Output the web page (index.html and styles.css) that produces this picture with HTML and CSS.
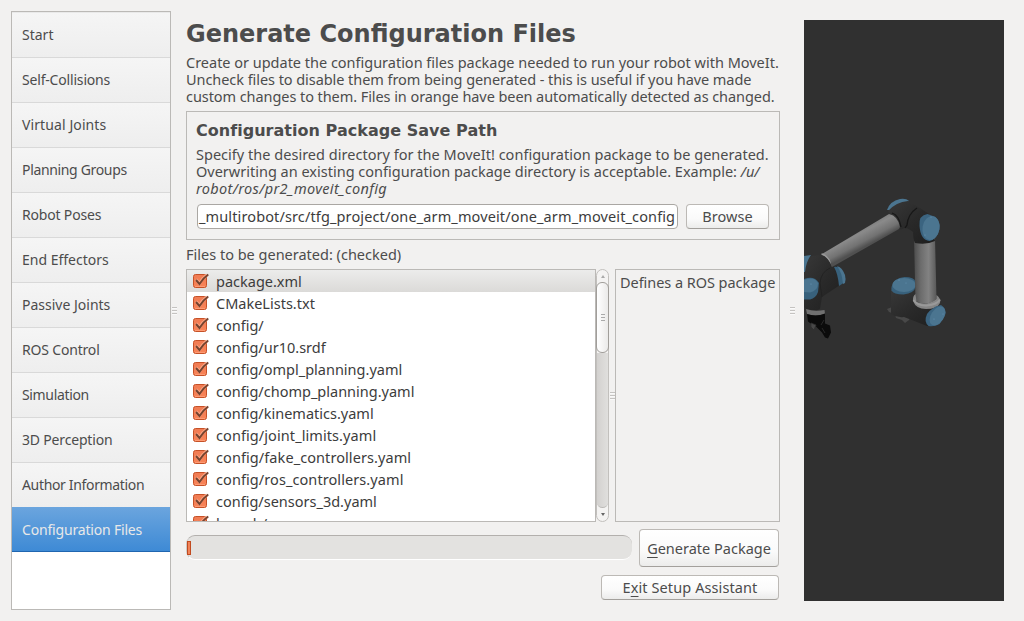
FILE: index.html
```html
<!DOCTYPE html>
<html lang="en">
<head>
<meta charset="utf-8">
<title>MoveIt Setup Assistant</title>
<link rel="stylesheet" href="styles.css">
</head>
<body>
<nav class="sidebar">
  <a class="nav-item">Start</a>
  <a class="nav-item snug">Self-Collisions</a>
  <a class="nav-item wide">Virtual Joints</a>
  <a class="nav-item tight">Planning Groups</a>
  <a class="nav-item snug">Robot Poses</a>
  <a class="nav-item">End Effectors</a>
  <a class="nav-item">Passive Joints</a>
  <a class="nav-item snug">ROS Control</a>
  <a class="nav-item tight">Simulation</a>
  <a class="nav-item snug">3D Perception</a>
  <a class="nav-item tight">Author Information</a>
  <a class="nav-item snug active">Configuration Files</a>
</nav>
<div class="splitter split-nav"><i class="grip"></i></div>
<main class="main">
  <h1 class="title">Generate Configuration Files</h1>
  <p class="intro">
    <span class="line l1">Create or update the configuration files package needed to run your robot with MoveIt.</span>
    <span class="line l2">Uncheck files to disable them from being generated - this is useful if you have made</span>
    <span class="line l3">custom changes to them. Files in orange have been automatically detected as changed.</span>
  </p>
  <section class="path-box">
    <h2 class="subtitle">Configuration Package Save Path</h2>
    <p class="path-help">
      <span class="line l4">Specify the desired directory for the MoveIt! configuration package to be generated.</span>
      <span class="line l5">Overwriting an existing configuration package directory is acceptable. Example: <em>/u/</em></span>
      <span class="line l6"><em>robot/ros/pr2_moveit_config</em></span>
    </p>
    <div class="path-row">
      <div class="path-field"><span class="l7">_multirobot/src/tfg_project/one_arm_moveit/one_arm_moveit_config</span></div>
      <button class="btn browse">Browse</button>
    </div>
  </section>
  <div class="files-label">Files to be generated: (checked)</div>
  <div class="files-row">
    <ul class="files">
      <li class="file selected"><svg class="check"><use href="#check"/></svg>package.xml</li>
      <li class="file"><svg class="check"><use href="#check"/></svg>CMakeLists.txt</li>
      <li class="file"><svg class="check"><use href="#check"/></svg>config/</li>
      <li class="file"><svg class="check"><use href="#check"/></svg>config/ur10.srdf</li>
      <li class="file"><svg class="check"><use href="#check"/></svg>config/ompl_planning.yaml</li>
      <li class="file"><svg class="check"><use href="#check"/></svg>config/chomp_planning.yaml</li>
      <li class="file"><svg class="check"><use href="#check"/></svg>config/kinematics.yaml</li>
      <li class="file loose"><svg class="check"><use href="#check"/></svg>config/joint_limits.yaml</li>
      <li class="file loose"><svg class="check"><use href="#check"/></svg>config/fake_controllers.yaml</li>
      <li class="file loose"><svg class="check"><use href="#check"/></svg>config/ros_controllers.yaml</li>
      <li class="file"><svg class="check"><use href="#check"/></svg>config/sensors_3d.yaml</li>
      <li class="file"><svg class="check"><use href="#check"/></svg>launch/</li>
    </ul>
    <div class="scrollbar">
      <span class="arrow"><i class="up"></i></span>
      <span class="thumb"><i class="ridges"></i></span>
      <span class="trough"></span>
      <span class="arrow"><i class="down"></i></span>
    </div>
    <div class="splitter split-files"><i class="grip"></i></div>
    <div class="description">Defines a ROS package</div>
  </div>
  <div class="generate-row">
    <div class="progress"><i class="progress-fill"></i></div>
    <button class="btn generate"><u>G</u>enerate Package</button>
  </div>
  <button class="btn exit">E<u>x</u>it Setup Assistant</button>
</main>
<div class="splitter split-view"><i class="grip"></i></div>
<section class="viewport">
  <svg class="robot" viewBox="804 190 200 160" width="200" height="160">
    <defs>
      <linearGradient id="upper" gradientUnits="userSpaceOnUse" x1="856" y1="227" x2="866" y2="246">
        <stop offset="0" stop-color="#747474"/><stop offset=".35" stop-color="#8a8a8a"/><stop offset=".75" stop-color="#727272"/><stop offset="1" stop-color="#505050"/>
      </linearGradient>
      <linearGradient id="post" x1="0" x2="1" y1="0" y2="0">
        <stop offset="0" stop-color="#4c4c4c"/><stop offset=".3" stop-color="#6c6c6c"/><stop offset=".65" stop-color="#828282"/><stop offset="1" stop-color="#585858"/>
      </linearGradient>
      <linearGradient id="joint" x1="0" x2="1" y1="0" y2="1">
        <stop offset="0" stop-color="#383838"/><stop offset=".5" stop-color="#292929"/><stop offset="1" stop-color="#1e1e1e"/>
      </linearGradient>
    </defs>
    <!-- base -->
    <path d="M887 309l5-2 18 11-1 2-4 3-3-3-6-2-1-4-6-2z" fill="#484848"/>
    <path d="M891 288v26q6 4 13 3l23 9h9l8-16-19-8-10 3-1-16z" fill="url(#joint)"/>
    <path d="M891.500 287q2-9 13-10 10 0 11 5v5q-1 6-12 7.500-10 0-12-4z" fill="#38617c"/>
    <ellipse cx="904" cy="285" rx="11.500" ry="7" fill="#4b7590"/>
    <!-- vertical link -->
    <path d="M914 238h21l1.500 61q-10 8-21 2z" fill="url(#post)"/>
    <path d="M915.500 294q-3 2-2.500 7 3 8 13 8 11 0 14-6 1-5-3.500-8v4q-9 7-20 3z" fill="#858585"/>
    <path d="M913.500 300q4 6 13 5.500 11-1 13.500-6" fill="none" stroke="#999" stroke-width="2"/>
    <path d="M927 314q5-7 14-9 5 3 4.500 9l-6 10q-5 3-11 2-5-4-1.500-12z" fill="#3b6480"/>
    <ellipse cx="937.500" cy="316" rx="10.500" ry="6.500" transform="rotate(-57 937.500 316)" fill="#4b7590"/>
    <!-- elbow -->
    <path d="M887 210q3-9 13-11 6-1 9 2l-18 9z" fill="#4b7590"/>
    <path d="M888 211q8-9 20-10l12 7 9 6 6 27q-8 4-20 2-2-4-2-11-5-4-8-4-7 3-12 0-1-10-5-17z" fill="url(#joint)"/>
    <path d="M917 208q-9 6-10 17l-2 3M892 213q7 2 9 14" fill="none" stroke="#171717" stroke-width="1.300"/>
    <path d="M919.500 226q-1-11 8-12l8 3q5 5 4 12-2 10-10 12-9-1-10-15z" fill="#3b6480"/>
    <ellipse cx="931" cy="228" rx="8.500" ry="12" transform="rotate(10 931 228)" fill="#4b7590"/>
    <!-- upper link -->
    <path d="M822 254l67-40q9 2 11 13l-1 2-67 38q-1-8-10-13z" fill="url(#upper)"/>
    <path d="M821.500 254q8 2 9.500 13" fill="none" stroke="#999" stroke-width="1.500"/>
    <!-- wrist -->
    <path d="M804 262l8-6 9-1q9 4 11 12l7-1 4 17-21 14-2 12q-9 5-16-2z" fill="url(#joint)"/>
    <path d="M820 283q1-11 10-15M820 283l2 14" fill="none" stroke="#222"/>
    <path d="M804 256l7-1q-5 7-6 17h-1z" fill="#4b7590"/>
    <path d="M834 267q5-1 9 5 3 6 2 10l-6 4q-1-12-5-19z" fill="#38617c"/>
    <path d="M837 266q5 1 8 9 1 4 0 8l-2 1q-1-12-6-18z" fill="#4b7590"/>
    <path d="M804 279q10-4 15 4l-1 9q-2 6-8 7.500h-6z" fill="#38617c"/>
    <path d="M804 280q10-4 14 3 0 8-8 9.500l-6-.5z" fill="#4b7590"/>
    <path d="M806 309q8 3 18.500 1l.5 4q-9 3-18 0z" fill="#707070"/>
    <path d="M807 314q9 3 18-.5v10l5 2 1 7-3 6-3-1-3-5-6-6-4-2-4-3z" fill="#0b0b0b"/>
    <path d="M811 323l5 2-2 5-3-3zM822 328l3 5M824 320l-3 5" fill="#484848" stroke="#303030" stroke-width=".8"/>
    <g fill="#6998b6"><circle cx="899" cy="280" r=".6"/><circle cx="906" cy="283" r=".5"/><circle cx="931" cy="217" r=".6"/><circle cx="925" cy="235" r=".6"/><circle cx="811" cy="284" r=".6"/><circle cx="943" cy="314" r=".5"/><circle cx="934" cy="319" r=".6"/></g>
  </svg>
</section>
<svg class="symbols" width="0" height="0">
  <defs>
    <linearGradient id="orange" x1="0" x2="0" y1="0" y2="1"><stop stop-color="#ef7b53"/><stop offset="1" stop-color="#f98458"/></linearGradient>
  </defs>
  <symbol id="check" viewBox="0 0 18 16">
    <rect x="1.500" y="1.500" width="13" height="13" rx="2" fill="url(#orange)" stroke="#c65127"/>
    <path d="M3 13.500h10" stroke="#ffa27c" stroke-width=".8"/>
    <path d="M4 6.500l3.500 4Q10 5.500 15 2" fill="none" stroke="#fba584" stroke-width="3"/>
    <path d="M4 7l3.500 4Q10.500 5.500 16.300 1.500" fill="none" stroke="#74432f" stroke-width="1.900"/>
  </symbol>
</svg>
</body>
</html>
```
FILE: styles.css
```css
* { box-sizing: border-box; }
body {
  margin: 0;
  width: 1024px;
  height: 621px;
  padding: 11px 20px 11px 11px;
  display: flex;
  overflow: hidden;
  background: #f2f1f0;
  color: #4c4c4c;
  font: 14.5px/17px "Noto Sans", "Open Sans", sans-serif;
}
h1, h2, p, ul { margin: 0; padding: 0; }
.sidebar {
  width: 160px;
  height: 599px;
  border: 1px solid #bbb9b6;
  background: #fff;
}
.nav-item {
  display: block;
  height: 45px;
  padding-left: 10px;
  line-height: 44px;
  font-size: 14px;
  white-space: nowrap;
  border-top: 1px solid #d9d9d9;
  background: linear-gradient(#f5f5f5, #eeeeee);
}
.nav-item:first-child { border-top-color: #e9e9e9; }
.nav-item.snug { letter-spacing: -.18px; }
.nav-item.tight { letter-spacing: -.34px; }
.nav-item.wide { letter-spacing: .1px; }
.nav-item.active {
  color: #e8e8e8;
  border-top: 0;
  border-bottom: 1px solid #2066b0;
  line-height: 46px;
  background: linear-gradient(#6ba5de, #3e8ad5);
}
.splitter { display: flex; justify-content: center; align-items: center; }
.grip {
  width: 5px;
  height: 8px;
  background: repeating-linear-gradient(#c5c3c1 0 1px, #fafafa 1px 2px, transparent 2px 3px);
}
.split-nav { width: 6px; margin-right: 1px; }
.split-view { width: 24px; }
.main {
  width: 594px;
  margin-left: 8px;
  display: flex;
  flex-direction: column;
}
.title {
  height: 43px;
  font: bold 24px/46px "DejaVu Sans", sans-serif;
  white-space: nowrap;
}
.line { display: block; white-space: nowrap; }
.l1 { letter-spacing: -.012px; }
.l2 { letter-spacing: -.06px; }
.l3 { letter-spacing: -.07px; }
.l4 { letter-spacing: .02px; }
.l6 { letter-spacing: .34px; }
.l7 { letter-spacing: .125px; }
.intro { height: 57px; }
.path-box {
  height: 129px;
  padding: 10px 10px 0 9px;
  border: 1px solid #bbb9b6;
}
.subtitle { height: 24px; font: bold 16px/18px "DejaVu Sans", sans-serif; letter-spacing: .03px; }
.path-row { display: flex; gap: 8px; margin-top: 7px; }
.path-field {
  width: 481px;
  height: 25px;
  margin-left: 1px;
  padding: 0 4px 0 1px;
  overflow: hidden;
  border: 1px solid #aaa7a3;
  border-radius: 4px;
  background: #fff;
  color: #3c3c3c;
  line-height: 22px;
  white-space: nowrap;
}
.btn {
  padding: 0;
  border: 1px solid #bcb9b5;
  border-bottom-color: #a3a09c;
  border-radius: 4px;
  background: linear-gradient(#fff, #fafafa 60%, #ececeb);
  color: #4c4c4c;
  font: inherit;
  white-space: nowrap;
}
.btn u { text-underline-offset: 3px; }
.browse { width: 83px; height: 25px; padding-bottom: 1px; letter-spacing: .08px; }
.files-label { height: 29px; line-height: 28px; }
.files-row { display: flex; height: 253px; }
.files {
  width: 410px;
  border: 1px solid #bbb9b6;
  background: #fff;
  overflow: hidden;
  list-style: none;
  color: #3c3c3c;
}
.file { display: flex; height: 22px; line-height: 22px; white-space: nowrap; }
.file.loose { letter-spacing: .08px; }
.file.selected { background: linear-gradient(#ececeb, #dbdad8); }
.check { width: 18px; height: 16px; margin: 3px 6px 0 5px; }
.scrollbar {
  width: 13px;
  display: flex;
  flex-direction: column;
  border: 1px solid #c2c0bd;
  border-radius: 7px;
  background: #f4f3f2;
}
.arrow { height: 13px; display: flex; justify-content: center; align-items: center; }
.up, .down { border: 2.5px solid transparent; border-top-width: 0; border-bottom: 3px solid #aaa; }
.down { border-bottom: 0; border-top: 3px solid #666; }
.thumb {
  height: 71px;
  margin: -1px -1px 0;
  display: flex;
  justify-content: center;
  align-items: center;
  border: 1px solid #a19e9a;
  border-radius: 6px;
  background: linear-gradient(90deg, #fff, #ebeae9);
}
.ridges { width: 4px; height: 7px; background: repeating-linear-gradient(#aaa 0 1px, transparent 1px 3px); }
.trough { flex: 1; border-bottom: 1px solid #bbb9b6; border-radius: 0 0 6px 6px; background: linear-gradient(90deg, #d3d1cf, #e0dfdd); }
.split-files { width: 6px; }
.description { width: 165px; padding: 4px; border: 1px solid #bbb9b6; letter-spacing: -.05px; white-space: nowrap; }
.generate-row { display: flex; justify-content: space-between; height: 46px; padding: 7px 1px 0 0; }
.progress {
  width: 446px;
  height: 25px;
  margin-top: 6px;
  padding: 5px 0 0 1px;
  border-top: 1px solid #b3b0ad;
  border-left: 1px solid #ccc9c6;
  border-bottom: 1px solid #fff;
  border-radius: 9px;
  background: #e3e2e0;
}
.progress-fill { display: block; width: 4px; height: 14px; margin-left: -1px; border: 1px solid #c14b20; background: #f18358; }
.generate { width: 140px; height: 38px; }
.exit { align-self: flex-end; width: 178px; height: 25px; margin: 7px 1px 0 0; padding-bottom: 1px; letter-spacing: .1px; }
.viewport { width: 200px; height: 581px; margin-top: 9px; padding-top: 170px; background: #303030; }
.robot { display: block; }
.symbols { position: absolute; }
```
